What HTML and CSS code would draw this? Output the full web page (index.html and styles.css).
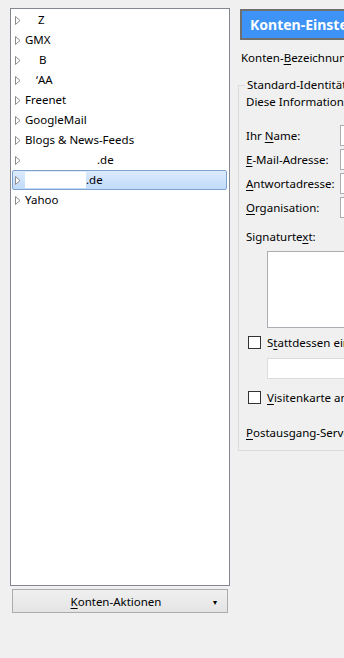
FILE: index.html
```html
<!DOCTYPE html>
<html lang="de">
<head>
    <meta charset="UTF-8">
    <meta name="viewport" content="width=device-width, initial-scale=1.0">
    <title>Konten-Einstellungen</title>
    <link rel="stylesheet" href="styles.css">
</head>
<body>

<div class="window">
    <!-- Kontenliste -->
    <div class="side">
        <ul class="tree">
            <li class="tree-item"><svg class="twisty" width="6" height="9" viewBox="0 0 6 9"><path d="M0.5 0.5 L5 4.5 L0.5 8.5 Z" fill="#fff" stroke="#8c8c8c"/></svg><span class="hidden-name" style="width:13px"></span>Z</li>
            <li class="tree-item"><svg class="twisty" width="6" height="9" viewBox="0 0 6 9"><path d="M0.5 0.5 L5 4.5 L0.5 8.5 Z" fill="#fff" stroke="#8c8c8c"/></svg>GMX</li>
            <li class="tree-item"><svg class="twisty" width="6" height="9" viewBox="0 0 6 9"><path d="M0.5 0.5 L5 4.5 L0.5 8.5 Z" fill="#fff" stroke="#8c8c8c"/></svg><span class="hidden-name" style="width:14px"></span>B</li>
            <li class="tree-item"><svg class="twisty" width="6" height="9" viewBox="0 0 6 9"><path d="M0.5 0.5 L5 4.5 L0.5 8.5 Z" fill="#fff" stroke="#8c8c8c"/></svg><span class="hidden-name" style="width:11px"></span>&#700;AA</li>
            <li class="tree-item"><svg class="twisty" width="6" height="9" viewBox="0 0 6 9"><path d="M0.5 0.5 L5 4.5 L0.5 8.5 Z" fill="#fff" stroke="#8c8c8c"/></svg>Freenet</li>
            <li class="tree-item"><svg class="twisty" width="6" height="9" viewBox="0 0 6 9"><path d="M0.5 0.5 L5 4.5 L0.5 8.5 Z" fill="#fff" stroke="#8c8c8c"/></svg>GoogleMail</li>
            <li class="tree-item"><svg class="twisty" width="6" height="9" viewBox="0 0 6 9"><path d="M0.5 0.5 L5 4.5 L0.5 8.5 Z" fill="#fff" stroke="#8c8c8c"/></svg>Blogs &amp; News-Feeds</li>
            <li class="tree-item"><svg class="twisty" width="6" height="9" viewBox="0 0 6 9"><path d="M0.5 0.5 L5 4.5 L0.5 8.5 Z" fill="#fff" stroke="#8c8c8c"/></svg><span class="hidden-name" style="width:72px"></span>.de</li>
            <li class="tree-item selected"><svg class="twisty" width="6" height="9" viewBox="0 0 6 9"><path d="M0.5 0.5 L5 4.5 L0.5 8.5 Z" fill="#fff" stroke="#8c8c8c"/></svg><span class="hidden-name blank" style="width:61px"></span>.de</li>
            <li class="tree-item"><svg class="twisty" width="6" height="9" viewBox="0 0 6 9"><path d="M0.5 0.5 L5 4.5 L0.5 8.5 Z" fill="#fff" stroke="#8c8c8c"/></svg>Yahoo</li>
        </ul>
        <button class="actions-btn"><span class="actions-label"><u>K</u>onten-Aktionen</span><span class="drop">&#9662;</span></button>
    </div>

    <!-- Einstellungen -->
    <div class="main">
        <div class="header">Konten-Einstellungen - Beispiel</div>

        <div class="field-line">Konten-<u>B</u>ezeichnung:</div>

        <fieldset class="group">
            <legend>Standard-Identität</legend>
            <div class="info">Diese Informationen erhalten die Empfänger Ihrer Nachrichten.</div>

            <div class="form-row"><label>Ihr <u>N</u>ame:</label><span class="text-input"></span></div>
            <div class="form-row"><label><u>E</u>-Mail-Adresse:</label><span class="text-input"></span></div>
            <div class="form-row"><label><u>A</u>ntwortadresse:</label><span class="text-input"></span></div>
            <div class="form-row"><label><u>O</u>rganisation:</label><span class="text-input"></span></div>

            <div class="sig-label">Signaturte<u>x</u>t:</div>
            <div class="textarea"></div>

            <div class="check-row"><span class="checkbox"></span>S<u>t</u>attdessen eine Datei als Signatur anhängen</div>
            <div class="file-input"></div>

            <div class="check-row card-row"><span class="checkbox"></span><u>V</u>isitenkarte an Nachrichten anhängen</div>

            <div class="smtp-line"><u>P</u>ostausgang-Server (SMTP):</div>
        </fieldset>
    </div>
</div>

</body>
</html>
```

FILE: styles.css
```css
body {
    margin: 0;
    width: 344px;
    height: 658px;
    overflow: hidden;
    background: #f0f0f0;
    font-family: "Noto Sans", "Open Sans", sans-serif;
    font-size: 11.5px;
    color: #000;
}
u {
    text-decoration: underline;
    text-underline-offset: 2px;
}
.window {
    display: flex;
    height: 100%;
}

.side {
    width: 220px;
    margin-left: 10px;
    padding-top: 8px;
    flex-shrink: 0;
}
.tree {
    list-style: none;
    margin: 0;
    padding: 1px 1px;
    box-sizing: border-box;
    height: 578px;
    background: #fff;
    border: 1px solid #828790;
}
.tree-item {
    display: flex;
    align-items: center;
    height: 20px;
    padding-left: 2px;
    margin-right: 1px;
    line-height: 20px;
    white-space: nowrap;
    box-sizing: border-box;
    border: 1px solid transparent;
    border-radius: 2px;
}
.tree-item.selected {
    background: linear-gradient(#dcebfc, #c1dbfc);
    border-color: #7da2ce;
}
.twisty {
    margin-right: 4px;
    flex-shrink: 0;
}
.hidden-name {
    display: inline-block;
    height: 16px;
}
.hidden-name.blank {
    background: #fff;
}

.actions-btn {
    display: flex;
    align-items: center;
    width: 216px;
    height: 24px;
    margin: 3px 0 0 2px;
    padding: 0 10px 0 0;
    border: 1px solid #acacac;
    background: linear-gradient(#f0f0f0, #e5e5e5);
    font: inherit;
    color: #000;
}
.actions-label {
    flex: 1;
    text-align: center;
    padding-left: 6px;
}
.drop {
    font-size: 8px;
}

.main {
    width: 340px;
    margin-left: 8px;
    flex-shrink: 0;
}
.header {
    margin: 9px 0 0 2px;
    height: 31px;
    box-sizing: border-box;
    padding-left: 8px;
    line-height: 27px;
    background: #3d93f6;
    border: 2px solid #6f6f6f;
    color: #fff;
    font-weight: bold;
    font-size: 14px;
    white-space: nowrap;
}
.field-line {
    margin: 10px 0 0 3px;
    line-height: 16px;
    white-space: nowrap;
}
.group {
    margin: 11px 0 0 0;
    padding: 0 0 12px 7px;
    height: 374px;
    box-sizing: border-box;
    border: 1px solid #dcdcdc;
    border-right: none;
    border-radius: 0;
}
.group legend {
    padding: 0 2px;
    margin-left: -1px;
    line-height: 16px;
    white-space: nowrap;
}
.info {
    margin-top: 1px;
    line-height: 16px;
    white-space: nowrap;
}
.form-row {
    display: flex;
    align-items: center;
    height: 24px;
}
.info + .form-row {
    margin-top: 13px;
}
.form-row label {
    width: 94px;
    white-space: nowrap;
}
.text-input {
    width: 200px;
    height: 21px;
    box-sizing: border-box;
    background: #fff;
    border: 1px solid #abadb3;
}
.sig-label {
    margin-top: 10px;
    line-height: 16px;
}
.textarea {
    margin: 6px 0 0 21px;
    height: 77px;
    background: #fff;
    border: 1px solid #abadb3;
    box-sizing: border-box;
}
.check-row {
    display: flex;
    align-items: center;
    margin-top: 6px;
    height: 16px;
    white-space: nowrap;
}
.checkbox {
    width: 13px;
    height: 13px;
    margin: 0 6px 0 2px;
    box-sizing: border-box;
    background: #fff;
    border: 1px solid #333;
}
.file-input {
    margin: 8px 0 0 21px;
    height: 21px;
    background: #fff;
    border: 1px solid #dcdcdc;
    box-sizing: border-box;
}
.card-row {
    margin-top: 10px;
}
.smtp-line {
    margin-top: 20px;
    line-height: 16px;
    white-space: nowrap;
}
```
